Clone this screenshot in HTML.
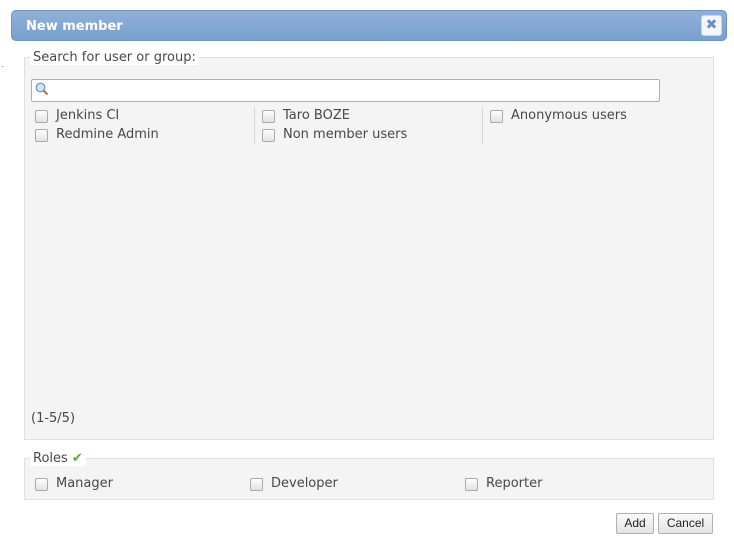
<!DOCTYPE html>
<html><head><style>
body{margin:0;width:734px;height:549px;background:#fff;font-family:"DejaVu Sans","Liberation Sans",sans-serif;font-size:13px;color:#484848;position:relative;overflow:hidden}
.abs{position:absolute}
.title{left:11px;top:10px;width:714px;height:29px;border:1px solid #6d95c0;border-radius:5px;background:linear-gradient(#8fb0d8,#7aa0cf);color:#fff;font-weight:bold;font-size:13px;line-height:31px}
.close{left:701px;top:15px;width:19px;height:19px;background:#f4f6f9;border:1px solid #c9d4e2;border-radius:3px;color:#6d8fbf;font-weight:bold;font-size:14px;line-height:19px;text-align:center}
.fs{border:1px solid #e0e0e0;background:#f4f4f4}
.leg{background:#fff;padding:0 3px;line-height:14px}
.cb{width:11px;height:11px;border:1px solid #aaa;border-radius:2px;background:linear-gradient(#fdfdfd,#e2e2e2)}
.sep{width:1px;background:#d6d6d6}
.btn{top:513px;height:19px;border:1px solid #b0b0b0;border-radius:2px;background:linear-gradient(#fafafa,#e4e4e4);color:#222;font-size:12px;line-height:19px;text-align:center;font-family:"Liberation Sans",sans-serif}
</style></head><body>
<div class="abs title"><span style="margin-left:14px">New member</span></div>
<div class="abs close">✖</div>
<div class="abs" style="left:2px;top:66px;width:1px;height:1px;background:#888"></div>

<div class="abs fs" style="left:24px;top:57px;width:688px;height:381px"></div>
<div class="abs leg" style="left:30px;top:51px">Search for user or group:</div>
<div class="abs" style="left:31px;top:79px;width:627px;height:21px;border:1px solid #9fb2c8;border-radius:2px;background:#fff"></div>
<svg class="abs" style="left:35px;top:82px" width="14" height="14" viewBox="0 0 14 14"><circle cx="5.5" cy="5.5" r="4.3" fill="#cfe4f7" stroke="#6a8fb8" stroke-width="1.2"/><line x1="8.5" y1="8.5" x2="12.5" y2="12.5" stroke="#b07a3a" stroke-width="2.2"/></svg>

<div class="abs sep" style="left:254px;top:107px;height:37px"></div>
<div class="abs sep" style="left:482px;top:107px;height:37px"></div>

<div class="abs cb" style="left:35px;top:110px"></div><div class="abs" style="left:56px;top:108px">Jenkins CI</div>
<div class="abs cb" style="left:35px;top:129px"></div><div class="abs" style="left:56px;top:127px">Redmine Admin</div>
<div class="abs cb" style="left:262px;top:110px"></div><div class="abs" style="left:283px;top:108px">Taro BOZE</div>
<div class="abs cb" style="left:262px;top:129px"></div><div class="abs" style="left:283px;top:127px">Non member users</div>
<div class="abs cb" style="left:490px;top:110px"></div><div class="abs" style="left:511px;top:108px">Anonymous users</div>
<div class="abs" style="left:31px;top:411px">(1-5/5)</div>

<div class="abs fs" style="left:24px;top:458px;width:688px;height:40px"></div>
<div class="abs leg" style="left:30px;top:452px">Roles <span style="color:#5aa63a">✔</span></div>
<div class="abs cb" style="left:35px;top:478px"></div><div class="abs" style="left:56px;top:476px">Manager</div>
<div class="abs cb" style="left:250px;top:478px"></div><div class="abs" style="left:271px;top:476px">Developer</div>
<div class="abs cb" style="left:465px;top:478px"></div><div class="abs" style="left:486px;top:476px">Reporter</div>

<div class="abs btn" style="left:616px;width:36px">Add</div>
<div class="abs btn" style="left:658px;width:53px">Cancel</div>
</body></html>
